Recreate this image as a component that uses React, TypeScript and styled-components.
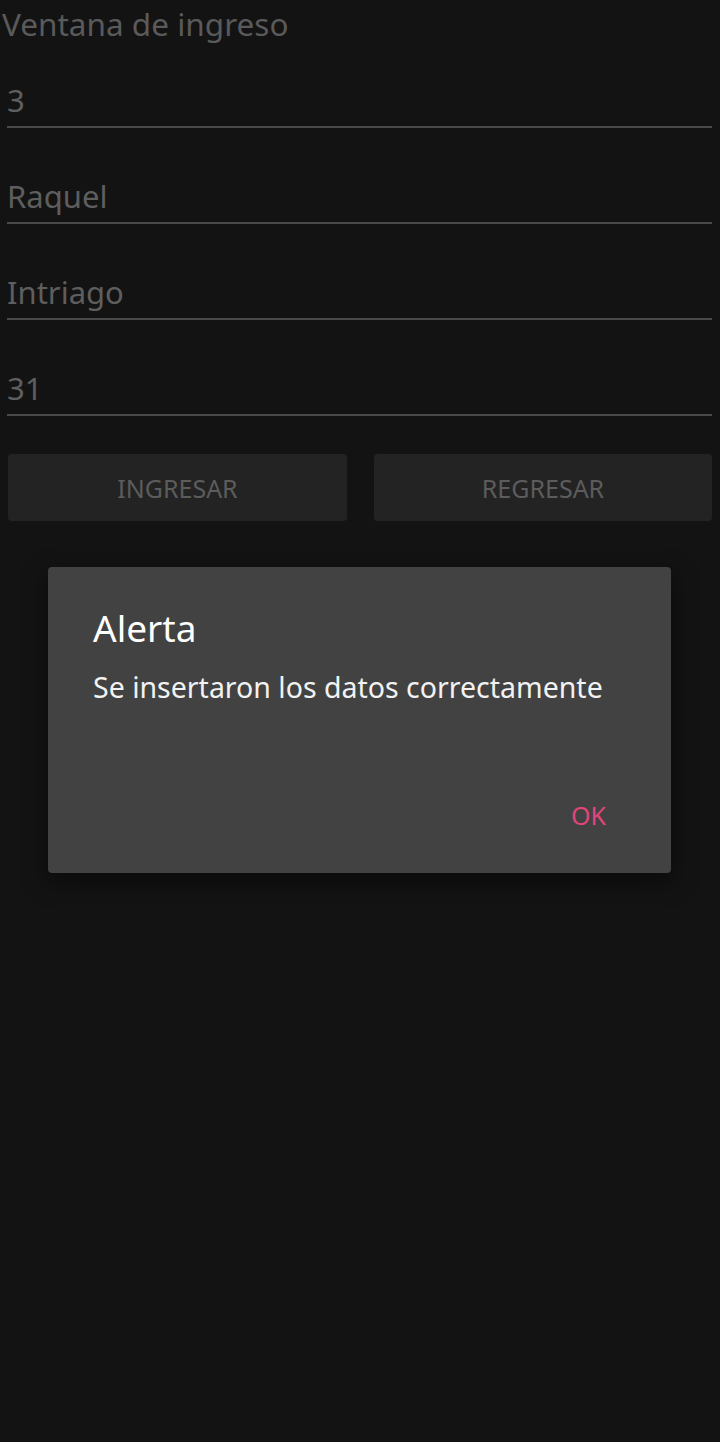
import React from 'react';
import styled, {createGlobalStyle} from 'styled-components';

const GlobalStyle = createGlobalStyle`
    html, body {
        margin: 0;
        padding: 0;
        background: #131313;
    }
    body {
        font-family: 'Noto Sans', Roboto, sans-serif;
    }
`;

const fields = ['3', 'Raquel', 'Intriago', '31'];

export default function App() {
    return (
        <>
            <GlobalStyle/>
            <Screen>
                <Title>Ventana de ingreso</Title>
                <Form>
                    {fields.map((value) => (
                        <Field key={value}>{value}</Field>
                    ))}
                </Form>
                <ButtonRow>
                    <FlatButton>INGRESAR</FlatButton>
                    <FlatButton>REGRESAR</FlatButton>
                </ButtonRow>
                <Dialog role='alertdialog'>
                    <DialogTitle>Alerta</DialogTitle>
                    <DialogMessage>Se insertaron los datos correctamente</DialogMessage>
                    <DialogActions>
                        <DialogButton>OK</DialogButton>
                    </DialogActions>
                </Dialog>
            </Screen>
        </>
    );
}

const Screen = styled.div`
    position: relative;
    width: 720px;
    height: 1442px;
    background: #131313;
    display: flex;
    flex-direction: column;
    overflow: hidden;
`;

const Title = styled.h1`
    margin: 0;
    padding: 2px 0 0 2px;
    font-size: 31.5px;
    font-weight: 400;
    line-height: 44px;
    color: #5a5a5a;
`;

const Form = styled.div`
    display: flex;
    flex-direction: column;
    padding: 0 8px 0 7px;
    margin-top: 32px;
`;

const Field = styled.div`
    height: 96px;
    box-sizing: border-box;
    border-bottom: 2px solid #494949;
    display: flex;
    align-items: flex-end;
    padding: 0 0 6px 0;
    font-size: 31px;
    line-height: 40px;
    color: #5e5e5e;
    &:first-child {
        height: 50px;
    }
`;

const ButtonRow = styled.div`
    display: grid;
    grid-template-columns: 339px 338px;
    justify-content: space-between;
    padding: 0 8px;
    margin-top: 38px;
`;

const FlatButton = styled.button`
    height: 67px;
    border: none;
    border-radius: 4px;
    background: #232323;
    color: #5c5c5c;
    font-family: 'Noto Sans', Roboto, sans-serif;
    font-size: 25px;
    letter-spacing: 0;
    padding: 0;
`;

const Dialog = styled.div`
    position: absolute;
    left: 48px;
    top: 567px;
    width: 623px;
    height: 306px;
    box-sizing: border-box;
    background: #424242;
    border-radius: 4px;
    box-shadow: 0 8px 24px rgba(0, 0, 0, 0.5);
    display: flex;
    flex-direction: column;
    padding: 36px 46px 0 45px;
`;

const DialogTitle = styled.h2`
    margin: 0;
    font-size: 37px;
    font-weight: 400;
    line-height: 50px;
    color: #ffffff;
`;

const DialogMessage = styled.p`
    margin: 14px 0 0 0;
    font-size: 28.5px;
    line-height: 40px;
    color: #f2f2f2;
`;

const DialogActions = styled.div`
    display: flex;
    justify-content: flex-end;
    margin-top: auto;
    padding-bottom: 41px;
`;

const DialogButton = styled.button`
    border: none;
    background: transparent;
    color: #e0457b;
    font-family: 'Noto Sans', Roboto, sans-serif;
    font-size: 25px;
    padding: 0 19px 0 0;
`;
